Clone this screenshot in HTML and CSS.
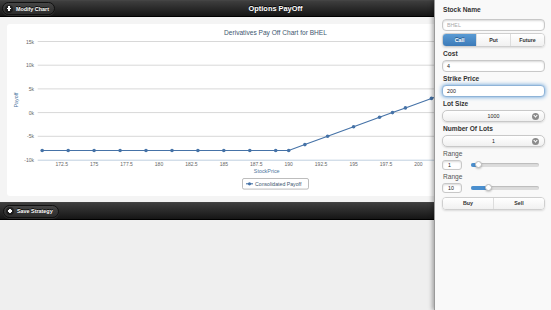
FILE: index.html
```html
<!DOCTYPE html>
<html lang="en">
<head>
  <meta charset="UTF-8">
  <title>Options PayOff</title>
  <link rel="stylesheet" href="styles.css">
</head>
<body>

<div class="page">
  <!-- Header -->
  <div class="bar top-bar">
    <a class="bar-btn"><span class="plus"></span>Modify Chart</a>
    <h1>Options PayOff</h1>
    <span></span>
  </div>

  <!-- Chart -->
  <div class="content">
    <div class="chart-card">
      <svg class="chart" width="537" height="172" viewBox="0 0 537 172">
        <text class="chart-title" x="268.5" y="10.8" text-anchor="middle">Derivatives Pay Off Chart for BHEL</text>

        <g class="grid">
          <line x1="30.7" y1="17.5" x2="490" y2="17.5"/>
          <line x1="30.7" y1="41.2" x2="490" y2="41.2"/>
          <line x1="30.7" y1="64.9" x2="490" y2="64.9"/>
          <line x1="30.7" y1="88.6" x2="490" y2="88.6"/>
          <line x1="30.7" y1="112.3" x2="490" y2="112.3"/>
        </g>
        <line class="axis" x1="30.7" y1="136.2" x2="490" y2="136.2"/>

        <g class="y-labels" text-anchor="end">
          <text x="27" y="19.5">15k</text>
          <text x="27" y="43.2">10k</text>
          <text x="27" y="66.9">5k</text>
          <text x="27" y="90.6">0k</text>
          <text x="27" y="114.3">-5k</text>
          <text x="27" y="138.2">-10k</text>
        </g>
        <text class="axis-title" transform="translate(10.5 76) rotate(-90)" text-anchor="middle">Payoff</text>

        <g class="x-labels" text-anchor="middle">
          <text x="54.7" y="142.4">172.5</text>
          <text x="87.1" y="142.4">175</text>
          <text x="119.6" y="142.4">177.5</text>
          <text x="152" y="142.4">180</text>
          <text x="184.4" y="142.4">182.5</text>
          <text x="216.8" y="142.4">185</text>
          <text x="249.3" y="142.4">187.5</text>
          <text x="281.7" y="142.4">190</text>
          <text x="314.1" y="142.4">192.5</text>
          <text x="346.6" y="142.4">195</text>
          <text x="379" y="142.4">197.5</text>
          <text x="411.4" y="142.4">200</text>
          <text x="443.9" y="142.4">202.5</text>
          <text x="476.3" y="142.4">205</text>
        </g>
        <text class="axis-title" x="259.7" y="149.2" text-anchor="middle">StockPrice</text>

        <polyline class="series" points="35.2,126.5 61.2,126.5 87.1,126.5 113.1,126.5 139,126.5 165,126.5 190.9,126.5 216.8,126.5 242.8,126.5 268.7,126.5 281.7,126.5 297.9,120.6 320.6,112.3 346.6,102.8 372.5,93.3 385.5,88.6 398.4,83.9 424.4,74.4 450.3,64.9 476.3,55.4"/>
        <g class="markers">
          <circle cx="35.2" cy="126.5" r="1.8"/>
          <circle cx="61.2" cy="126.5" r="1.8"/>
          <circle cx="87.1" cy="126.5" r="1.8"/>
          <circle cx="113.1" cy="126.5" r="1.8"/>
          <circle cx="139" cy="126.5" r="1.8"/>
          <circle cx="165" cy="126.5" r="1.8"/>
          <circle cx="190.9" cy="126.5" r="1.8"/>
          <circle cx="216.8" cy="126.5" r="1.8"/>
          <circle cx="242.8" cy="126.5" r="1.8"/>
          <circle cx="268.7" cy="126.5" r="1.8"/>
          <circle cx="281.7" cy="126.5" r="1.8"/>
          <circle cx="297.9" cy="120.6" r="1.8"/>
          <circle cx="320.6" cy="112.3" r="1.8"/>
          <circle cx="346.6" cy="102.8" r="1.8"/>
          <circle cx="372.5" cy="93.3" r="1.8"/>
          <circle cx="385.5" cy="88.6" r="1.8"/>
          <circle cx="398.4" cy="83.9" r="1.8"/>
          <circle cx="424.4" cy="74.4" r="1.8"/>
          <circle cx="450.3" cy="64.9" r="1.8"/>
          <circle cx="476.3" cy="55.4" r="1.8"/>
        </g>

        <rect class="legend-box" x="235.5" y="154.5" width="66" height="10.6" rx="1.5"/>
        <line class="series" x1="239" y1="159.8" x2="246" y2="159.8"/>
        <circle class="markers" cx="242.5" cy="159.8" r="1.6"/>
        <text class="legend-text" x="248" y="161.8">Consolidated Payoff</text>
      </svg>
    </div>
  </div>

  <!-- Footer -->
  <div class="bar bottom-bar">
    <a class="bar-btn"><span class="plus"></span>Save Strategy</a>
  </div>
</div>

<!-- Right panel -->
<div class="panel">
  <label class="first">Stock Name</label>
  <div class="field placeholder">BHEL</div>

  <div class="segmented">
    <span class="active">Call</span>
    <span>Put</span>
    <span>Future</span>
  </div>

  <label>Cost</label>
  <div class="field">4</div>

  <label>Strike Price</label>
  <div class="field focus">200</div>

  <label>Lot Size</label>
  <div class="select">1000<span class="arrow"></span></div>

  <label>Number Of Lots</label>
  <div class="select">1<span class="arrow"></span></div>

  <label class="light">Range</label>
  <div class="range-row">
    <div class="mini-field">1</div>
    <div class="track"><div class="fill" style="width: 8px"></div><span class="handle" style="left: 8px"></span></div>
  </div>

  <label class="light">Range</label>
  <div class="range-row">
    <div class="mini-field">10</div>
    <div class="track"><div class="fill" style="width: 18px"></div><span class="handle" style="left: 18px"></span></div>
  </div>

  <div class="segmented plain">
    <span>Buy</span>
    <span>Sell</span>
  </div>
</div>

</body>
</html>
```

FILE: styles.css
```css
body {
  margin: 0;
  font-family: "Liberation Sans", Arial, sans-serif;
  background: #efefef;
  width: 551px;
  height: 310px;
  overflow: hidden;
  position: relative;
}

/* bars */
.bar {
  background: linear-gradient(#3e3e3e, #151515);
  border-top: 1px solid #444;
  border-bottom: 1px solid #000;
  box-sizing: border-box;
}
.top-bar {
  height: 17px;
  display: grid;
  grid-template-columns: 1fr auto 1fr;
  align-items: center;
  padding: 0 2px;
}
.top-bar h1 {
  margin: 0;
  color: #fff;
  font-size: 7.4px;
  font-weight: bold;
  text-shadow: 0 -1px 0 #000;
}
.bottom-bar {
  height: 18px;
  display: flex;
  align-items: center;
  padding: 0 3px;
}
.bar-btn {
  justify-self: start;
  display: flex;
  align-items: center;
  height: 13px;
  padding: 0 5px 0 2px;
  border: 1px solid #111;
  border-radius: 8px;
  background: linear-gradient(#454545, #2c2c2c);
  box-shadow: 0 1px 0 rgba(255,255,255,.1);
  color: #fff;
  font-size: 5.4px;
  font-weight: bold;
  white-space: nowrap;
  text-shadow: 0 -1px 0 #000;
  box-sizing: border-box;
}
.plus {
  flex: none;
  width: 8px;
  height: 8px;
  border-radius: 50%;
  background: rgba(0,0,0,.45);
  margin-right: 3px;
  position: relative;
}
.plus::before, .plus::after {
  content: "";
  position: absolute;
  background: #fff;
  left: 1.8px;
  top: 3.3px;
  width: 4.4px;
  height: 1.4px;
}
.plus::after {
  left: 3.3px;
  top: 1.8px;
  width: 1.4px;
  height: 4.4px;
}

/* chart */
.content {
  padding: 7px 7px 6px;
  background: #f4f4f4;
}
.chart-card {
  background: #fff;
  border-radius: 3px;
  height: 172px;
}
.chart {
  display: block;
  font-family: "Liberation Sans", Arial, sans-serif;
}
.chart-title {
  font-size: 6.6px;
  fill: #3e576f;
}
.grid line {
  stroke: #d8d8d8;
  stroke-width: 1;
}
.axis {
  stroke: #c0d0e0;
  stroke-width: 1;
}
.y-labels, .x-labels {
  font-size: 5px;
  fill: #666;
}
.axis-title {
  font-size: 5.4px;
  fill: #4d759e;
}
.series {
  fill: none;
  stroke: #4572a7;
  stroke-width: 1.1;
}
.markers {
  fill: #4572a7;
}
.legend-box {
  fill: #fff;
  stroke: #909090;
  stroke-width: .6;
}
.legend-text {
  font-size: 5.2px;
  fill: #3e576f;
}

/* right panel */
.panel {
  position: absolute;
  top: 0;
  right: 0;
  width: 117px;
  height: 310px;
  box-sizing: border-box;
  padding: 0 6px 0 7px;
  background: #f9f9f9;
  border-left: 1px solid #9a9a9a;
  box-shadow: -2px 0 4px rgba(0,0,0,.3);
}
.panel label {
  display: block;
  font-size: 6.6px;
  font-weight: bold;
  color: #333;
  line-height: 10px;
  margin: 2px 0 1px 1px;
}
.panel label.first {
  margin: 5px 0 4px 1px;
}
.panel label.light {
  font-weight: normal;
  color: #555;
  line-height: 9px;
  margin-bottom: 2px;
}
.field, .select, .mini-field {
  height: 12px;
  box-sizing: border-box;
  border: 1px solid #c8c8c8;
  border-radius: 4px;
  background: #fff;
  box-shadow: inset 0 1px 2px rgba(0,0,0,.15);
  font-size: 5.3px;
  color: #222;
  line-height: 10px;
  padding-left: 4px;
  margin-bottom: 2px;
}
.field.placeholder {
  color: #aaa;
}
.field.focus {
  border-color: #8fb4d8;
  box-shadow: 0 0 4px #5a9ad6;
}
.select {
  position: relative;
  text-align: center;
  padding-left: 0;
  border-radius: 5px;
  background: linear-gradient(#fff, #f0f0f0);
  box-shadow: 0 1px 2px rgba(0,0,0,.12);
}
.arrow {
  position: absolute;
  right: 5px;
  top: 1.5px;
  width: 7px;
  height: 7px;
  border-radius: 50%;
  background: #8a8a8a;
}
.arrow::after {
  content: "";
  position: absolute;
  left: 2px;
  top: 1.2px;
  width: 2px;
  height: 2px;
  border-right: 1px solid #fff;
  border-bottom: 1px solid #fff;
  transform: rotate(45deg);
}

.segmented {
  display: flex;
  height: 14px;
  border: 1px solid #cfcfcf;
  border-radius: 4px;
  overflow: hidden;
  box-sizing: border-box;
  margin-top: 1px;
  box-shadow: 0 1px 2px rgba(0,0,0,.12);
}
.segmented span {
  flex: 1;
  text-align: center;
  line-height: 12px;
  font-size: 5.3px;
  font-weight: bold;
  color: #333;
  background: linear-gradient(#fff, #f1f1f1);
  border-left: 1px solid #ddd;
}
.segmented span:first-child {
  border-left: none;
}
.segmented span.active {
  color: #fff;
  background: linear-gradient(#5a9bd4, #3c7ab8);
  text-shadow: 0 -1px 0 #2a5a8a;
}
.segmented.plain {
  height: 13px;
  margin-top: 4px;
}
.segmented.plain span {
  line-height: 11px;
}

.range-row {
  display: flex;
  align-items: center;
  height: 10px;
  margin-top: 1px;
  margin-bottom: 2px;
}
.mini-field {
  width: 20px;
  height: 10px;
  line-height: 8px;
  margin: 0 9px 0 0;
  padding-left: 5px;
  border-radius: 3px;
}
.track {
  position: relative;
  width: 68px;
  height: 4px;
  border-radius: 2px;
  background: #dcdcdc;
  box-shadow: inset 0 1px 1px rgba(0,0,0,.15);
}
.fill {
  height: 4px;
  border-radius: 2px;
  background: #4a8fcf;
}
.handle {
  position: absolute;
  top: -2.5px;
  margin-left: -4.5px;
  width: 7px;
  height: 7px;
  box-sizing: border-box;
  border-radius: 50%;
  background: #fff;
  border: 1px solid #bbb;
  box-shadow: 0 1px 2px rgba(0,0,0,.2);
}
```
